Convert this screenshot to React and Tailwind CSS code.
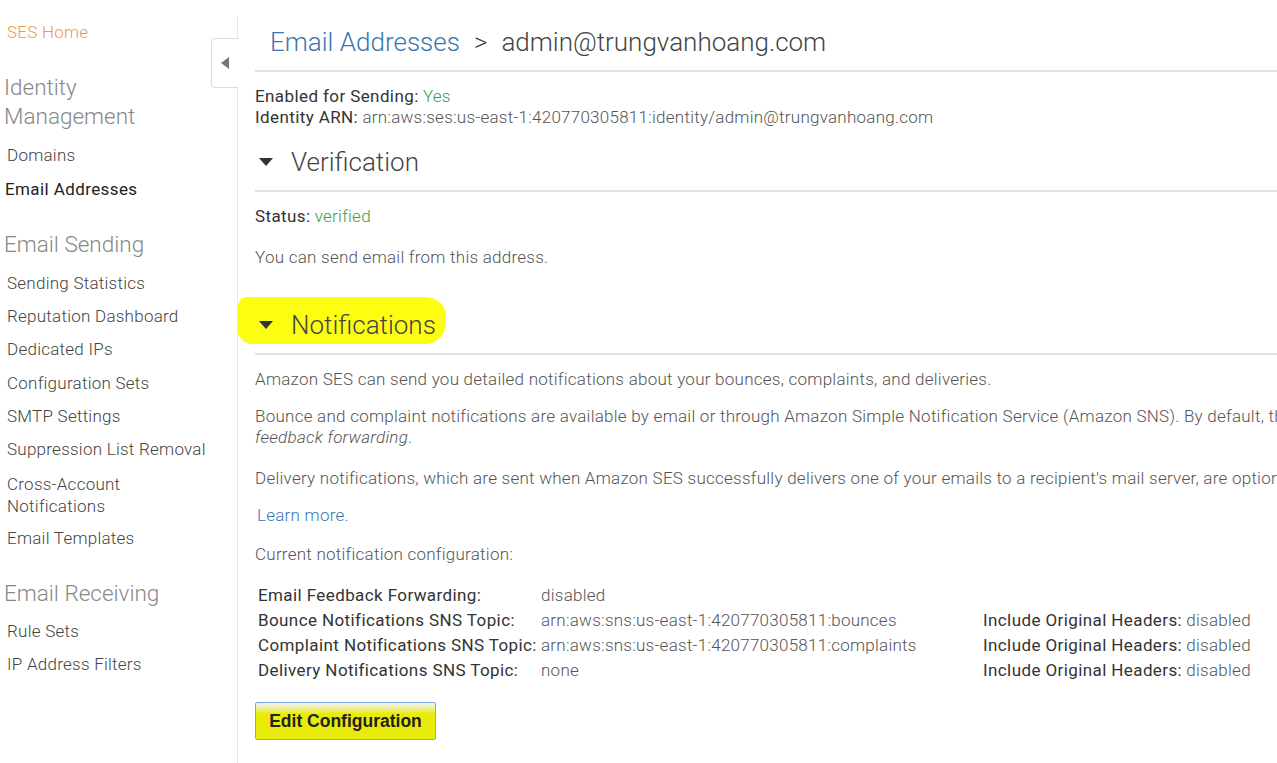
import React from "react";

function DownTri() {
  return (
    <svg width="14" height="8" viewBox="0 0 14 8" className="shrink-0">
      <path d="M0 0 L14 0 L7 8 Z" fill="#333" />
    </svg>
  );
}

const SideItem = ({ children, active, className = "" }) => (
  <div
    className={
      "text-[17px] leading-[21px] " +
      (active ? "pl-[5px] text-[#222] font-normal tracking-[0.4px] " : "pl-[7px] text-[#444] font-light tracking-[0.25px] ") +
      className
    }
  >
    {children}
  </div>
);

const SideHead = ({ children, className = "" }) => (
  <div className={"pl-[4px] text-[22.5px] leading-[29px] font-light text-[#888] " + className}>
    {children}
  </div>
);

const L = ({ children }) => <span className="text-[#333] font-normal tracking-[0.4px]">{children}</span>;
const V = ({ children, green }) => (
  <span className={"font-light tracking-[0.25px] " + (green ? "text-[#3e9b45]" : "text-[#555]")}>{children}</span>
);

export default function App() {
  return (
    <div
      className="flex w-[1277px] h-[763px] bg-white overflow-hidden"
      style={{ fontFamily: "Roboto, 'Noto Sans', sans-serif" }}
    >
      {/* Sidebar */}
      <div className="relative w-[238px] shrink-0 border-r border-[#e6e6e6] mt-[16px]">
        <div className="pt-[6px] pl-[7px] text-[17px] leading-[21px] font-light tracking-[0.25px] text-[#f0994a]">SES Home</div>
        <SideHead className="mt-[30px]">Identity<br />Management</SideHead>
        <SideItem className="mt-[14px]">Domains</SideItem>
        <SideItem active className="mt-[13px]">Email Addresses</SideItem>
        <SideHead className="mt-[30px]">Email Sending</SideHead>
        <div className="mt-[13.5px] flex flex-col gap-[12.4px]">
          <SideItem>Sending Statistics</SideItem>
          <SideItem>Reputation Dashboard</SideItem>
          <SideItem>Dedicated IPs</SideItem>
          <SideItem>Configuration Sets</SideItem>
          <SideItem>SMTP Settings</SideItem>
          <SideItem>Suppression List Removal</SideItem>
          <div className="pl-[7px] text-[17px] leading-[22px] font-light tracking-[0.25px] text-[#444]">
            Cross-Account<br />Notifications
          </div>
        </div>
        <SideItem className="mt-[11px]">Email Templates</SideItem>
        <SideHead className="mt-[30px]">Email Receiving</SideHead>
        <SideItem className="mt-[13px]">Rule Sets</SideItem>
        <SideItem className="mt-[12px]">IP Address Filters</SideItem>

        {/* collapse tab */}
        <div className="absolute right-[-1px] top-[22px] w-[27px] h-[50px] bg-white border border-r-0 border-[#dcdcdc] rounded-l-[4px] flex items-center justify-center">
          <svg width="8" height="12" viewBox="0 0 8 12">
            <path d="M8 0 L8 12 L0 6 Z" fill="#777" />
          </svg>
        </div>
      </div>

      {/* Main */}
      <div className="flex-1 min-w-0 overflow-hidden pl-[17px]">
        <div className="pt-[26px] pl-[15px] text-[26px] leading-[32px] font-light text-[#444] whitespace-nowrap">
          <span className="text-[#3b76b0]">Email Addresses</span>
          <span className="mx-[14px]">&gt;</span>
          <span>admin@trungvanhoang.com</span>
        </div>
        <div className="mt-[12px] h-[2px] bg-[#e2e2e2]" />

        <div className="mt-[14px] text-[17px] leading-[21px] whitespace-nowrap">
          <div>
            <L>Enabled for Sending:</L> <V green>Yes</V>
          </div>
          <div>
            <L>Identity ARN:</L> <V>arn:aws:ses:us-east-1:420770305811:identity/admin@trungvanhoang.com</V>
          </div>
        </div>

        <div className="mt-[18px] flex items-center h-[32px] pl-[4px]">
          <DownTri />
          <span className="ml-[18px] text-[26px] font-light text-[#444]">Verification</span>
        </div>
        <div className="mt-[12px] h-[2px] bg-[#e2e2e2]" />

        <div className="mt-[14px] text-[17px] leading-[21px]">
          <L>Status:</L> <V green>verified</V>
        </div>
        <div className="mt-[20px] text-[17px] leading-[21px] font-light tracking-[0.25px] text-[#555]">
          You can send email from this address.
        </div>

        <div className="mt-[41px] h-[32px] flex">
          <div className="relative flex items-center h-[32px] pl-[4px]">
            <div className="absolute left-[-19px] top-[-12px] w-[210px] h-[47px] bg-[#fdfd12] rounded-[10px_22px_20px_16px/20px_18px_22px_20px]" />
            <div className="relative"><DownTri /></div>
            <span className="relative ml-[18px] text-[26px] font-light text-[#444]">Notifications</span>
          </div>
        </div>
        <div className="mt-[12px] h-[2px] bg-[#e2e2e2]" />

        <div className="text-[17px] leading-[21px] font-light tracking-[0.25px] text-[#555] whitespace-nowrap">
          <div className="mt-[14px]">
            Amazon SES can send you detailed notifications about your bounces, complaints, and deliveries.
          </div>
          <div className="mt-[16px]">
            Bounce and complaint notifications are available by email or through Amazon Simple Notification Service (Amazon SNS). By default, these notifications are sent by email using
            <br />
            <i>feedback forwarding</i>.
          </div>
          <div className="mt-[20px]">
            Delivery notifications, which are sent when Amazon SES successfully delivers one of your emails to a recipient's mail server, are optional and can only be sent through Amazon SNS.
          </div>
          <div className="mt-[16px] pl-[2px] text-[#3b76b0]">Learn more.</div>
          <div className="mt-[18px]">Current notification configuration:</div>
        </div>

        <div className="mt-[18px] pl-[3px] grid grid-cols-[283px_442px_auto] text-[17px] leading-[25px] whitespace-nowrap">
          <div><L>Email Feedback Forwarding:</L></div>
          <div><V>disabled</V></div>
          <div />
          <div><L>Bounce Notifications SNS Topic:</L></div>
          <div><V>arn:aws:sns:us-east-1:420770305811:bounces</V></div>
          <div><L>Include Original Headers:</L> <V>disabled</V></div>
          <div><L>Complaint Notifications SNS Topic:</L></div>
          <div><V>arn:aws:sns:us-east-1:420770305811:complaints</V></div>
          <div><L>Include Original Headers:</L> <V>disabled</V></div>
          <div><L>Delivery Notifications SNS Topic:</L></div>
          <div><V>none</V></div>
          <div><L>Include Original Headers:</L> <V>disabled</V></div>
        </div>

        <button
          className="mt-[19px] w-[181px] h-[38px] border border-[#7ea6d9] rounded-[2px] bg-[linear-gradient(to_bottom,#f2f2f2_0%,#eef0a0_14%,#e8ec08_30%,#e8ec08_100%)] text-[17.5px] font-bold text-[#222] flex items-center justify-center"
          style={{ fontFamily: "'Liberation Sans', Arial, sans-serif" }}
        >
          Edit Configuration
        </button>
      </div>
    </div>
  );
}
